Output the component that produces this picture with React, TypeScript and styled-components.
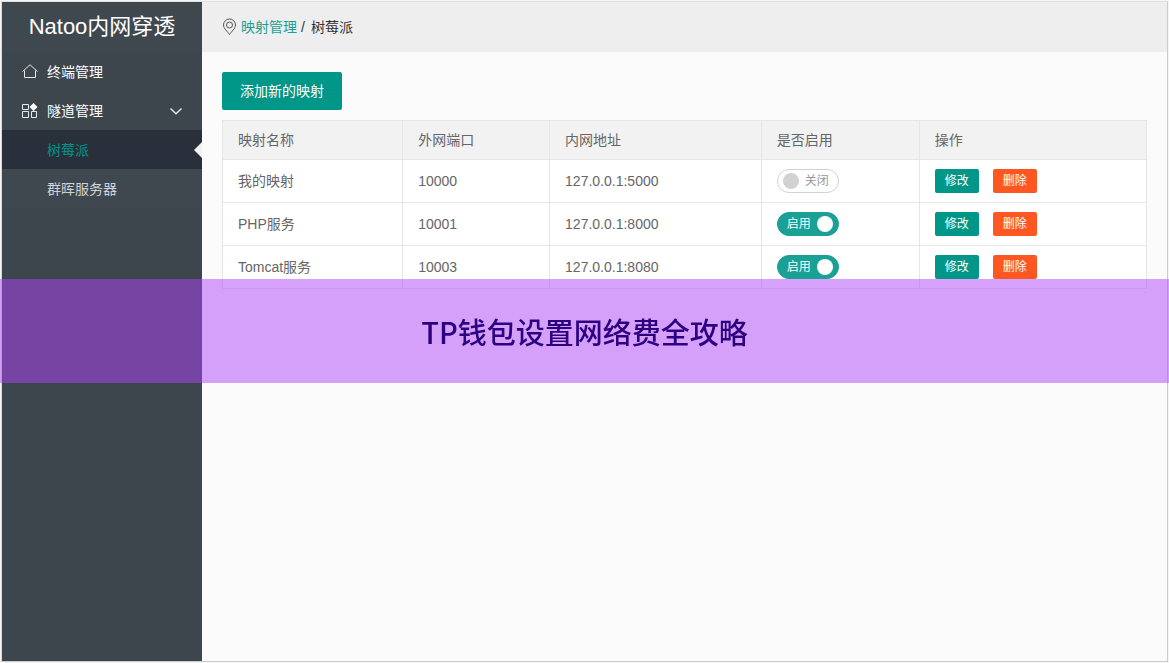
import React, { useState } from "react";
import styled, { createGlobalStyle, css } from "styled-components";

const teal = "#009688";
const line = "#e6e6e6";

const GlobalStyle = createGlobalStyle`
  *, *::before, *::after { box-sizing: border-box; }
  body {
    margin: 0;
    background: #f5f5f5;
    color: #666;
    font: 14px/24px "Liberation Sans", "Noto Sans CJK SC", sans-serif;
  }
  button, input { font: inherit; }
  a { text-decoration: none; color: inherit; }
`;

const Frame = styled.div`
  display: flex;
  min-height: 100vh;
  padding: 1px;
`;

const Window = styled.div`
  flex: 1;
  display: flex;
  min-width: 0;
  border: 1px solid #ccc;
  border-top-color: #e0e0e0;
  border-left-color: #d8d8d8;
  background: #fbfbfb;
`;

const Sidebar = styled.aside`
  flex: 0 0 200px;
  background: #3d454d;
`;

const Brand = styled.h1`
  margin: 0;
  background: #40484f;
  color: #fff;
  font-size: 22px;
  font-weight: 400;
  line-height: 50px;
  text-align: center;
`;

const Menu = styled.ul`
  list-style: none;
  margin: 0;
  padding: 0;
`;

const itemBox = css`
  display: flex;
  align-items: center;
  width: 100%;
  height: 39px;
  padding: 0 19px 0 20px;
  border: 0;
  background: none;
  text-align: left;
  cursor: pointer;
`;

const MenuLink = styled.a`
  ${itemBox}
  gap: 9px;
  color: #fff;
`;

const MenuToggle = styled.button`
  ${itemBox}
  gap: 9px;
  color: #fff;
`;

const MenuText = styled.span`
  flex: 1;
`;

const SubLink = styled.a<{ $active?: boolean }>`
  ${itemBox}
  position: relative;
  padding-left: 45px;
  color: ${(p) => (p.$active ? teal : "#d0d3d6")};
  background: ${(p) => (p.$active ? "#29303b" : "#40484f")};

  ${(p) =>
    p.$active &&
    css`
      &::after {
        content: "";
        position: absolute;
        right: 0;
        top: 12px;
        border: 8px solid transparent;
        border-left-width: 0;
        border-right-color: #f2f2f2;
      }
    `}
`;

const Main = styled.main`
  flex: 1;
  min-width: 0;
`;

const Breadcrumb = styled.nav`
  display: flex;
  align-items: center;
  gap: 4px;
  height: 50px;
  padding: 0 20px;
  background: #eee;
  color: #333;

  a {
    color: #1aa094;
  }
`;

const Separator = styled.span`
  padding-right: 2px;
`;

const Content = styled.section`
  display: flex;
  flex-direction: column;
  align-items: flex-start;
  gap: 10px;
  padding: 20px;
`;

const PrimaryButton = styled.button`
  height: 38px;
  padding: 0 18px;
  border: 0;
  border-radius: 2px;
  background: ${teal};
  color: #fff;
  cursor: pointer;
`;

const SmallButton = styled.button<{ $danger?: boolean }>`
  height: 24px;
  padding: 0 10px;
  border: 0;
  border-radius: 2px;
  background: ${(p) => (p.$danger ? "#ff5722" : teal)};
  color: #fff;
  font-size: 12px;
  cursor: pointer;
`;

const Actions = styled.div`
  display: flex;
  gap: 14px;
`;

const Table = styled.table`
  width: 100%;
  table-layout: fixed;
  border-collapse: collapse;
  background: #fff;

  th,
  td {
    border: 1px solid ${line};
    padding: 9px 15px;
    text-align: left;
    font-weight: 400;
  }

  th {
    padding: 7px 15px;
    background: #f2f2f2;
  }
`;

const Col = styled.col<{ $share: number }>`
  width: ${(p) => p.$share}%;
`;

const SwitchBox = styled.label<{ $on: boolean }>`
  position: relative;
  display: flex;
  flex-direction: ${(p) => (p.$on ? "row" : "row-reverse")};
  align-items: center;
  justify-content: space-between;
  width: 62px;
  height: 24px;
  padding: ${(p) => (p.$on ? "0 5px 0 9px" : "0 9px 0 5px")};
  border: 1px solid ${(p) => (p.$on ? "#1aa094" : "#d2d2d2")};
  border-radius: 12px;
  background: ${(p) => (p.$on ? "#1aa094" : "#fff")};
  color: ${(p) => (p.$on ? "#fff" : "#999")};
  font-size: 12px;
  cursor: pointer;

  input {
    position: absolute;
    inset: 0;
    margin: 0;
    opacity: 0;
  }
`;

const Knob = styled.i<{ $on: boolean }>`
  width: 16px;
  height: 16px;
  border-radius: 50%;
  background: ${(p) => (p.$on ? "#fff" : "#d2d2d2")};
`;

const BannerLayer = styled.div`
  position: fixed;
  inset: 0 0 1px;
  display: flex;
  align-items: center;
  pointer-events: none;
`;

const Banner = styled.div`
  flex: 1;
  background: rgba(176, 69, 249, 0.5);
  color: #2d0082;
  font: 500 29px/104px "Noto Sans CJK SC", sans-serif;
  text-align: center;
`;

const HomeIcon = () => (
  <svg width="16" height="16" viewBox="0 0 16 16" fill="none" stroke="#e6e8ea" aria-hidden="true">
    <path d="M0.5 7.500 8 0.800l7.500 6.700M2.500 6.500v7h11v-7" />
  </svg>
);

const GridIcon = () => (
  <svg width="16" height="16" viewBox="0 0 16 16" fill="none" stroke="#e6e8ea" aria-hidden="true">
    <path d="M0.500 1.500h6v5h-6zM0.500 8.500h6v6h-6zM9.500 8.500h5v6h-5z" />
    <path d="M11.500 0 15.500 4l-4 4-4-4z" fill="#fff" stroke="none" />
  </svg>
);

const ChevronIcon = () => (
  <svg width="14" height="14" viewBox="0 0 14 14" fill="none" stroke="#e6e8ea" strokeWidth="1.4" aria-hidden="true">
    <path d="m1.500 4.500 5.500 5.300 5.500-5.300" />
  </svg>
);

const PinIcon = () => (
  <svg width="15" height="18" viewBox="0 0 15 18" fill="none" stroke="#555" aria-hidden="true">
    <path d="M7.500 16.500C5.500 13.500 1.500 10.500 1.500 7a6 6 0 0 1 12 0c0 3.500-4 6.500-6 9.500z" />
    <circle cx="7.500" cy="7" r="3" />
  </svg>
);

function Switch({ initial, name }: { initial: boolean; name: string }) {
  const [on, setOn] = useState(initial);
  return (
    <SwitchBox $on={on}>
      <input type="checkbox" aria-label={name} checked={on} onChange={() => setOn(!on)} />
      <span>{on ? "启用" : "关闭"}</span>
      <Knob $on={on} />
    </SwitchBox>
  );
}

const mappings = [
  { name: "我的映射", port: "10000", address: "127.0.0.1:5000", enabled: false },
  { name: "PHP服务", port: "10001", address: "127.0.0.1:8000", enabled: true },
  { name: "Tomcat服务", port: "10003", address: "127.0.0.1:8080", enabled: true },
];

export default function App() {
  return (
    <>
      <GlobalStyle />
      <Frame>
        <Window>
          <Sidebar>
            <Brand>Natoo内网穿透</Brand>
            <Menu>
              <li>
                <MenuLink href="#terminals">
                  <HomeIcon />
                  <MenuText>终端管理</MenuText>
                </MenuLink>
              </li>
              <li>
                <MenuToggle type="button" aria-expanded="true">
                  <GridIcon />
                  <MenuText>隧道管理</MenuText>
                  <ChevronIcon />
                </MenuToggle>
                <Menu>
                  <li>
                    <SubLink href="#raspberry" $active>树莓派</SubLink>
                  </li>
                  <li>
                    <SubLink href="#synology">群晖服务器</SubLink>
                  </li>
                </Menu>
              </li>
            </Menu>
          </Sidebar>
          <Main>
            <Breadcrumb>
              <PinIcon />
              <a href="#mappings">映射管理</a>
              <Separator>/</Separator>
              <span>树莓派</span>
            </Breadcrumb>
            <Content>
              <PrimaryButton type="button">添加新的映射</PrimaryButton>
              <Table>
                <colgroup>
                  <Col $share={19.5} />
                  <Col $share={15.9} />
                  <Col $share={22.9} />
                  <Col $share={17.1} />
                  <Col $share={24.6} />
                </colgroup>
                <thead>
                  <tr>
                    <th>映射名称</th>
                    <th>外网端口</th>
                    <th>内网地址</th>
                    <th>是否启用</th>
                    <th>操作</th>
                  </tr>
                </thead>
                <tbody>
                  {mappings.map((m) => (
                    <tr key={m.port}>
                      <td>{m.name}</td>
                      <td>{m.port}</td>
                      <td>{m.address}</td>
                      <td>
                        <Switch initial={m.enabled} name={m.name} />
                      </td>
                      <td>
                        <Actions>
                          <SmallButton type="button">修改</SmallButton>
                          <SmallButton type="button" $danger>删除</SmallButton>
                        </Actions>
                      </td>
                    </tr>
                  ))}
                </tbody>
              </Table>
            </Content>
          </Main>
        </Window>
      </Frame>
      <BannerLayer>
        <Banner>TP钱包设置网络费全攻略</Banner>
      </BannerLayer>
    </>
  );
}
